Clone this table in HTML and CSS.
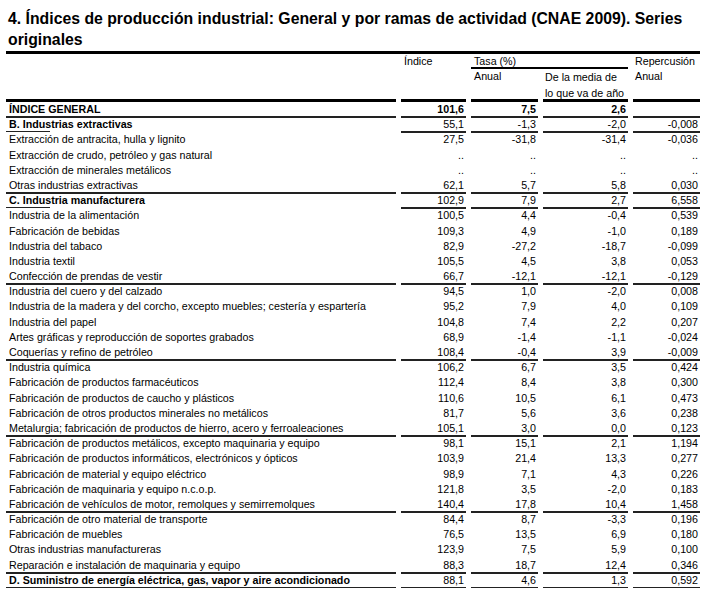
FILE: index.html
```html
<!DOCTYPE html>
<html lang="es">
<head>
<meta charset="utf-8">
<title>Índices de producción industrial</title>
<link rel="stylesheet" href="styles.css">
</head>
<body>
<div class="page">
  <h1 class="title">4. Índices de producción industrial: General y por ramas de actividad (CNAE 2009). Series<br>originales</h1>
  <div class="head">
    <div class="h-idx">Índice</div>
    <div class="h-tasa">Tasa (%)</div>
    <div class="h-rep">Repercusión</div>
    <div class="h-anual">Anual</div>
    <div class="h-media">De la media de<br>lo que va de año</div>
    <div class="h-anual2">Anual</div>
  </div>
  <div class="body">
    <div class="row first sep total"><div class="lbl">ÍNDICE GENERAL</div><div class="n">101,6</div><div class="n">7,5</div><div class="n">2,6</div><div class="n"></div></div>
    <div class="row short sec"><div class="lbl">B. Industrias extractivas</div><div class="n">55,1</div><div class="n">-1,3</div><div class="n">-2,0</div><div class="n">-0,008</div></div>
    <div class="row"><div class="lbl">Extracción de antracita, hulla y lignito</div><div class="n">27,5</div><div class="n">-31,8</div><div class="n">-31,4</div><div class="n">-0,036</div></div>
    <div class="row"><div class="lbl">Extracción de crudo, petróleo y gas natural</div><div class="n">..</div><div class="n">..</div><div class="n">..</div><div class="n">..</div></div>
    <div class="row"><div class="lbl">Extracción de minerales metálicos</div><div class="n">..</div><div class="n">..</div><div class="n">..</div><div class="n">..</div></div>
    <div class="row sep"><div class="lbl">Otras industrias extractivas</div><div class="n">62,1</div><div class="n">5,7</div><div class="n">5,8</div><div class="n">0,030</div></div>
    <div class="row short sec"><div class="lbl">C. Industria manufacturera</div><div class="n">102,9</div><div class="n">7,9</div><div class="n">2,7</div><div class="n">6,558</div></div>
    <div class="row"><div class="lbl">Industria de la alimentación</div><div class="n">100,5</div><div class="n">4,4</div><div class="n">-0,4</div><div class="n">0,539</div></div>
    <div class="row"><div class="lbl">Fabricación de bebidas</div><div class="n">109,3</div><div class="n">4,9</div><div class="n">-1,0</div><div class="n">0,189</div></div>
    <div class="row"><div class="lbl">Industria del tabaco</div><div class="n">82,9</div><div class="n">-27,2</div><div class="n">-18,7</div><div class="n">-0,099</div></div>
    <div class="row"><div class="lbl">Industria textil</div><div class="n">105,5</div><div class="n">4,5</div><div class="n">3,8</div><div class="n">0,053</div></div>
    <div class="row sep"><div class="lbl">Confección de prendas de vestir</div><div class="n">66,7</div><div class="n">-12,1</div><div class="n">-12,1</div><div class="n">-0,129</div></div>
    <div class="row"><div class="lbl">Industria del cuero y del calzado</div><div class="n">94,5</div><div class="n">1,0</div><div class="n">-2,0</div><div class="n">0,008</div></div>
    <div class="row"><div class="lbl">Industria de la madera y del corcho, excepto muebles; cestería y espartería</div><div class="n">95,2</div><div class="n">7,9</div><div class="n">4,0</div><div class="n">0,109</div></div>
    <div class="row"><div class="lbl">Industria del papel</div><div class="n">104,8</div><div class="n">7,4</div><div class="n">2,2</div><div class="n">0,207</div></div>
    <div class="row"><div class="lbl">Artes gráficas y reproducción de soportes grabados</div><div class="n">68,9</div><div class="n">-1,4</div><div class="n">-1,1</div><div class="n">-0,024</div></div>
    <div class="row sep"><div class="lbl">Coquerías y refino de petróleo</div><div class="n">108,4</div><div class="n">-0,4</div><div class="n">3,9</div><div class="n">-0,009</div></div>
    <div class="row"><div class="lbl">Industria química</div><div class="n">106,2</div><div class="n">6,7</div><div class="n">3,5</div><div class="n">0,424</div></div>
    <div class="row"><div class="lbl">Fabricación de productos farmacéuticos</div><div class="n">112,4</div><div class="n">8,4</div><div class="n">3,8</div><div class="n">0,300</div></div>
    <div class="row"><div class="lbl">Fabricación de productos de caucho y plásticos</div><div class="n">110,6</div><div class="n">10,5</div><div class="n">6,1</div><div class="n">0,473</div></div>
    <div class="row"><div class="lbl">Fabricación de otros productos minerales no metálicos</div><div class="n">81,7</div><div class="n">5,6</div><div class="n">3,6</div><div class="n">0,238</div></div>
    <div class="row sep"><div class="lbl">Metalurgia; fabricación de productos de hierro, acero y ferroaleaciones</div><div class="n">105,1</div><div class="n">3,0</div><div class="n">0,0</div><div class="n">0,123</div></div>
    <div class="row"><div class="lbl">Fabricación de productos metálicos, excepto maquinaria y equipo</div><div class="n">98,1</div><div class="n">15,1</div><div class="n">2,1</div><div class="n">1,194</div></div>
    <div class="row"><div class="lbl">Fabricación de productos informáticos, electrónicos y ópticos</div><div class="n">103,9</div><div class="n">21,4</div><div class="n">13,3</div><div class="n">0,277</div></div>
    <div class="row"><div class="lbl">Fabricación de material y equipo eléctrico</div><div class="n">98,9</div><div class="n">7,1</div><div class="n">4,3</div><div class="n">0,226</div></div>
    <div class="row"><div class="lbl">Fabricación de maquinaria y equipo n.c.o.p.</div><div class="n">121,8</div><div class="n">3,5</div><div class="n">-2,0</div><div class="n">0,183</div></div>
    <div class="row sep"><div class="lbl">Fabricación de vehículos de motor, remolques y semirremolques</div><div class="n">140,4</div><div class="n">17,8</div><div class="n">10,4</div><div class="n">1,458</div></div>
    <div class="row"><div class="lbl">Fabricación de otro material de transporte</div><div class="n">84,4</div><div class="n">8,7</div><div class="n">-3,3</div><div class="n">0,196</div></div>
    <div class="row"><div class="lbl">Fabricación de muebles</div><div class="n">76,5</div><div class="n">13,5</div><div class="n">6,9</div><div class="n">0,180</div></div>
    <div class="row"><div class="lbl">Otras industrias manufactureras</div><div class="n">123,9</div><div class="n">7,5</div><div class="n">5,9</div><div class="n">0,100</div></div>
    <div class="row sep"><div class="lbl">Reparación e instalación de maquinaria y equipo</div><div class="n">88,3</div><div class="n">18,7</div><div class="n">12,4</div><div class="n">0,346</div></div>
    <div class="row sep sec"><div class="lbl">D. Suministro de energía eléctrica, gas, vapor y aire acondicionado</div><div class="n">88,1</div><div class="n">4,6</div><div class="n">1,3</div><div class="n">0,592</div></div>
  </div>
</div>
</body>
</html>
```

FILE: styles.css
```css
html, body {
  margin: 0;
  padding: 0;
  background: #fff;
}

body {
  font-family: "Liberation Sans", Arial, sans-serif;
  font-size: 10.7px;
  color: #000;
}

.page {
  width: 694px;
  padding: 8px 0 0 6px;
}

.title {
  margin: 0;
  padding: 0 0 1px 2px;
  font-size: 15.8px;
  font-weight: bold;
  line-height: 21px;
  border-bottom: 3px solid #000;
  white-space: nowrap;
}

.head,
.row {
  display: grid;
  grid-template-columns: 390px 65px 67px 85px 67px;
  column-gap: 5px;
}

.head {
  grid-template-rows: 15px 30px;
  line-height: 14px;
}

.head > div {
  padding-left: 3px;
}

.h-idx { grid-column: 2; grid-row: 1; }
.h-tasa {
  grid-column: 3 / span 2;
  grid-row: 1;
  border-bottom: 2px solid #000;
}
.h-rep { grid-column: 5; grid-row: 1; padding-left: 2px !important; }
.h-anual { grid-column: 3; grid-row: 2; }
.h-media { grid-column: 4; grid-row: 2; line-height: 16px; padding-left: 2px !important; }
.h-anual2 { grid-column: 5; grid-row: 2; padding-left: 2px !important; }

.row > div {
  box-sizing: border-box;
  height: 15.2px;
  line-height: 15.2px;
  white-space: nowrap;
}

.row.first > div {
  height: 18.2px;
  border-top: 3px solid #000;
}

.lbl {
  padding-left: 3px;
}

.n {
  text-align: right;
  padding-right: 2px;
}

.sep > div,
.short .n {
  border-bottom: 1px solid #222;
  box-shadow: 0 1px 0 #222;
  line-height: 14.2px;
}

.short .lbl {
  background: linear-gradient(#222, #222) left bottom / 44px 1px no-repeat;
}

.total > div,
.sec .lbl {
  font-weight: bold;
}
```
